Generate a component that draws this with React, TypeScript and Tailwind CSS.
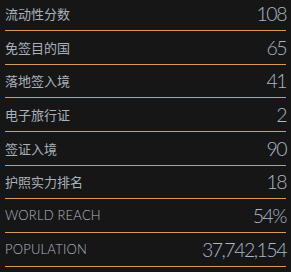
import React from "react";

const rows: { label: string; value: string; latin?: boolean }[] = [
  { label: "流动性分数", value: "108" },
  { label: "免签目的国", value: "65" },
  { label: "落地签入境", value: "41" },
  { label: "电子旅行证", value: "2" },
  { label: "签证入境", value: "90" },
  { label: "护照实力排名", value: "18" },
  { label: "WORLD REACH", value: "54%", latin: true },
  { label: "POPULATION", value: "37,742,154", latin: true },
];

export default function App() {
  return (
    <div className="w-[291px] h-[272px] overflow-hidden bg-[#161616] px-[5px]">
      <div className="mt-[-2.7px]">
        {rows.map((r) => (
          <div
            key={r.label}
            className="h-[33.7px] box-border border-b border-[#d79a5c] flex items-center justify-between"
          >
            <span
              className={
                r.latin
                  ? "text-[13px] font-light text-[#b0b9c3] tracking-[0.2px] font-['Lato','Noto_Sans_CJK_SC',sans-serif]"
                  : "text-[13px] text-[#a9b2bc] font-['Noto_Sans_CJK_SC',sans-serif]"
              }
            >
              {r.label}
            </span>
            <span className="text-[19.5px] font-light text-[#a9b7c6] tracking-[-1.5px] font-['Lato',sans-serif]">
              {r.value}
            </span>
          </div>
        ))}
      </div>
    </div>
  );
}
